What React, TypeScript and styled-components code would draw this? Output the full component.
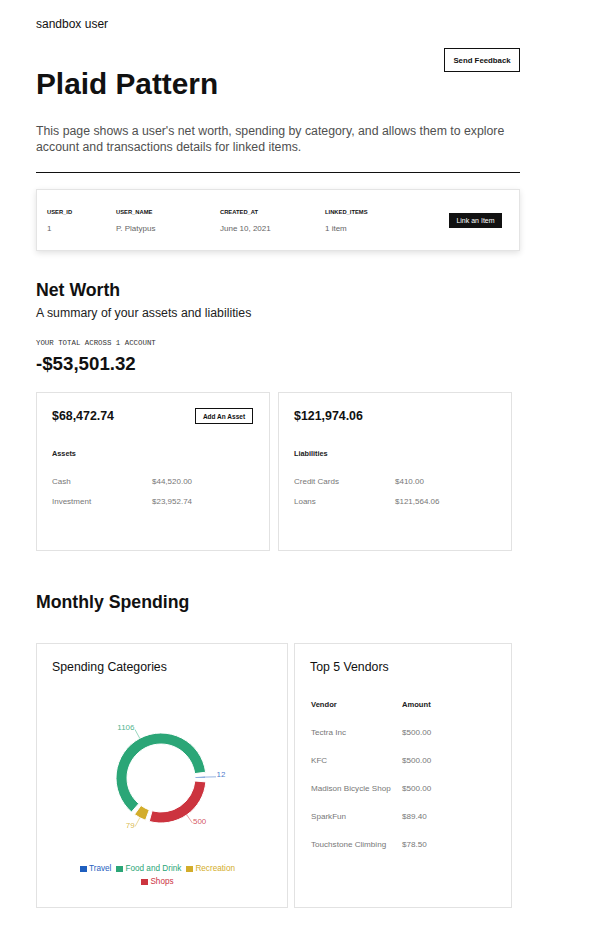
import React from "react";
import styled, { createGlobalStyle } from "styled-components";

const GlobalStyle = createGlobalStyle`
  html, body { margin: 0; padding: 0; background: #fff; }
  body { font-family: "Liberation Sans", Arial, sans-serif; color: #111; }
  * { box-sizing: border-box; }
`;

const Page = styled.div`
  width: 601px;
  padding: 15px 81px 16px 36px;
`;

const UserLabel = styled.div`
  font-size: 12px;
  line-height: 18px;
  color: #111;
`;

const HeaderRow = styled.div`
  display: flex;
  justify-content: space-between;
  align-items: flex-start;
  margin-top: 15px;
`;

const Title = styled.h1`
  margin: 18px 0 0;
  font-size: 29.8px;
  line-height: 36px;
  font-weight: 700;
  color: #111;
`;

const OutlineButton = styled.button<{ $w: number; $h: number; $fs: number; $bw?: number }>`
  width: ${(p) => p.$w}px;
  height: ${(p) => p.$h}px;
  border: ${(p) => p.$bw ?? 1}px solid #111;
  background: #fff;
  color: #111;
  font-family: "Liberation Sans", Arial, sans-serif;
  font-size: ${(p) => p.$fs}px;
  font-weight: 700;
  padding: 0;
  flex-shrink: 0;
`;

const Description = styled.p`
  margin: 21px 0 0;
  font-size: 12.3px;
  line-height: 16px;
  color: #505050;
`;

const Rule = styled.hr`
  margin: 17px 0 0;
  border: 0;
  border-top: 1px solid #111;
`;

const UserCard = styled.div`
  margin-top: 16px;
  height: 62px;
  border: 1px solid #e4e4e4;
  box-shadow: 0 2px 6px rgba(0, 0, 0, 0.12);
  display: grid;
  grid-template-columns: 69px 104px 105px 1fr auto;
  align-items: center;
  padding: 0 17px 0 10px;
`;

const UserCell = styled.div`
  display: flex;
  flex-direction: column;
  gap: 6px;
  padding-top: 1px;
`;

const CellHead = styled.div`
  font-size: 5.8px;
  line-height: 10px;
  font-weight: 700;
  color: #111;
  text-transform: uppercase;
`;

const CellValue = styled.div`
  font-size: 8px;
  line-height: 12px;
  color: #666;
`;

const DarkButton = styled.button`
  width: 53px;
  height: 15px;
  background: #111;
  color: #fff;
  border: 0;
  font-family: "Liberation Sans", Arial, sans-serif;
  font-size: 7px;
  padding: 0;
`;

const SectionTitle = styled.h2<{ $mt: number }>`
  margin: ${(p) => p.$mt}px 0 0;
  font-size: 17.7px;
  line-height: 22px;
  font-weight: 700;
  color: #111;
`;

const SubTitle = styled.div`
  margin-top: 4px;
  font-size: 12.3px;
  line-height: 16px;
  color: #222;
`;

const MonoLabel = styled.div`
  margin-top: 17px;
  font-family: "Liberation Mono", "DejaVu Sans Mono", monospace;
  font-size: 7.4px;
  line-height: 10px;
  color: #333;
  text-transform: uppercase;
`;

const Total = styled.div`
  margin-top: 5px;
  font-size: 18.7px;
  line-height: 22px;
  font-weight: 700;
  color: #111;
`;

const CardRow = styled.div<{ $mt: number; $gap: number; $h: number; $cols: string }>`
  margin-top: ${(p) => p.$mt}px;
  display: grid;
  grid-template-columns: ${(p) => p.$cols};
  gap: ${(p) => p.$gap}px;
  height: ${(p) => p.$h}px;
`;

const Card = styled.div`
  border: 1px solid #e2e2e2;
  padding: 15px 16px 0 15px;
  display: flex;
  flex-direction: column;
`;

const CardHead = styled.div`
  display: flex;
  justify-content: space-between;
  align-items: center;
  height: 16px;
`;

const Amount = styled.div`
  font-size: 12.4px;
  font-weight: 700;
  color: #111;
`;

const SmallBold = styled.div<{ $mt: number }>`
  margin-top: ${(p) => p.$mt}px;
  font-size: 7.3px;
  line-height: 10px;
  font-weight: 700;
  color: #222;
`;

const AccountList = styled.div`
  margin-top: 17px;
  display: flex;
  flex-direction: column;
  gap: 8px;
`;

const AccountRow = styled.div<{ $first: number }>`
  display: grid;
  grid-template-columns: ${(p) => p.$first}px 1fr;
  font-size: 8px;
  line-height: 12px;
  color: #777;
`;

const CardTitle = styled.div`
  font-size: 12.3px;
  line-height: 16px;
  color: #111;
`;

const ChartSvg = styled.svg`
  display: block;
  margin-top: 5px;
`;

const Legend = styled.div`
  margin-top: 6px;
  display: flex;
  flex-wrap: wrap;
  justify-content: center;
  padding: 0 32px 0 24px;
  font-size: 8.2px;
  line-height: 13px;
`;

const LegendItem = styled.span<{ $c: string }>`
  display: inline-flex;
  align-items: center;
  margin: 0 2.5px;
  color: ${(p) => p.$c};
  &::before {
    content: "";
    width: 7px;
    height: 6px;
    margin-right: 2px;
    background: ${(p) => p.$c};
  }
`;

const VendorTable = styled.div`
  margin-top: 24px;
  display: flex;
  flex-direction: column;
  gap: 16px;
`;

const VendorRow = styled.div<{ $head?: boolean }>`
  display: grid;
  grid-template-columns: 91px 1fr;
  padding-left: 1px;
  font-size: ${(p) => (p.$head ? 7.6 : 8.1)}px;
  font-weight: ${(p) => (p.$head ? 700 : 400)};
  line-height: 12px;
  color: ${(p) => (p.$head ? "#222" : "#777")};
`;

const slices = [
  { name: "Travel", value: 12, color: "#1f5fbf" },
  { name: "Food and Drink", value: 1106, color: "#2ba677" },
  { name: "Recreation", value: 79, color: "#d3ad2b" },
  { name: "Shops", value: 500, color: "#cc343f" },
];

const CX = 109;
const CY = 98;
const RO = 45;
const RI = 34;
const PAD = 5;

const pt = (r: number, a: number) => {
  const rad = (a * Math.PI) / 180;
  return [CX + r * Math.cos(rad), CY - r * Math.sin(rad)];
};

const arcPath = (a0: number, a1: number) => {
  const large = a1 - a0 > 180 ? 1 : 0;
  const [x0, y0] = pt(RO, a0);
  const [x1, y1] = pt(RO, a1);
  const [x2, y2] = pt(RI, a1);
  const [x3, y3] = pt(RI, a0);
  return `M${x0} ${y0} A${RO} ${RO} 0 ${large} 0 ${x1} ${y1} L${x2} ${y2} A${RI} ${RI} 0 ${large} 1 ${x3} ${y3} Z`;
};

const Donut = () => {
  const total = slices.reduce((s, d) => s + d.value, 0);
  const avail = 360 - PAD * slices.length;
  let a = 0;
  const parts = slices.map((d) => {
    const a0 = a;
    const a1 = a0 + (d.value / total) * avail;
    a = a1 + PAD;
    const mid = (a0 + a1) / 2;
    const [lx0, ly0] = pt(RO, mid);
    const [lx1, ly1] = pt(RO + 10, mid);
    const right = lx1 >= CX;
    return (
      <g key={d.name}>
        <path d={arcPath(a0, a1)} fill={d.color} stroke="#fff" strokeWidth={1} />
        <line x1={lx0} y1={ly0} x2={lx1} y2={ly1} stroke={d.color} strokeOpacity={0.6} strokeWidth={0.8} />
        <text
          x={lx1 + (right ? 0.5 : -0.5)}
          y={ly1 - (mid < 180 ? 2 : 1.5)}
          fill={d.color}
          fillOpacity={0.85}
          fontSize={8}
          fontFamily='"Liberation Sans", Arial, sans-serif'
          textAnchor={right ? "start" : "end"}
          dominantBaseline="central"
        >
          {d.value}
        </text>
      </g>
    );
  });
  return (
    <ChartSvg width={220} height={176} viewBox="0 0 220 176">
      {parts}
    </ChartSvg>
  );
};

const vendors = [
  ["Tectra Inc", "$500.00"],
  ["KFC", "$500.00"],
  ["Madison Bicycle Shop", "$500.00"],
  ["SparkFun", "$89.40"],
  ["Touchstone Climbing", "$78.50"],
];

export default function App() {
  return (
    <>
      <GlobalStyle />
      <Page>
        <UserLabel>sandbox user</UserLabel>
        <HeaderRow>
          <Title>Plaid Pattern</Title>
          <OutlineButton $w={76} $h={24} $fs={7.8} $bw={1.3}>Send Feedback</OutlineButton>
        </HeaderRow>
        <Description>
          This page shows a user's net worth, spending by category, and allows them to explore account and
          transactions details for linked items.
        </Description>
        <Rule />
        <UserCard>
          <UserCell>
            <CellHead>user_id</CellHead>
            <CellValue>1</CellValue>
          </UserCell>
          <UserCell>
            <CellHead>user_name</CellHead>
            <CellValue>P. Platypus</CellValue>
          </UserCell>
          <UserCell>
            <CellHead>created_at</CellHead>
            <CellValue>June 10, 2021</CellValue>
          </UserCell>
          <UserCell>
            <CellHead>linked_items</CellHead>
            <CellValue>1 item</CellValue>
          </UserCell>
          <DarkButton>Link an Item</DarkButton>
        </UserCard>

        <SectionTitle $mt={28}>Net Worth</SectionTitle>
        <SubTitle>A summary of your assets and liabilities</SubTitle>
        <MonoLabel>Your total across 1 account</MonoLabel>
        <Total>-$53,501.32</Total>

        <CardRow $mt={17} $gap={8} $h={159} $cols="234px 234px">
          <Card>
            <CardHead>
              <Amount>$68,472.74</Amount>
              <OutlineButton $w={58} $h={16} $fs={6.5}>Add An Asset</OutlineButton>
            </CardHead>
            <SmallBold $mt={25}>Assets</SmallBold>
            <AccountList>
              <AccountRow $first={100}>
                <span>Cash</span>
                <span>$44,520.00</span>
              </AccountRow>
              <AccountRow $first={100}>
                <span>Investment</span>
                <span>$23,952.74</span>
              </AccountRow>
            </AccountList>
          </Card>
          <Card>
            <CardHead>
              <Amount>$121,974.06</Amount>
            </CardHead>
            <SmallBold $mt={25}>Liabilities</SmallBold>
            <AccountList>
              <AccountRow $first={101}>
                <span>Credit Cards</span>
                <span>$410.00</span>
              </AccountRow>
              <AccountRow $first={101}>
                <span>Loans</span>
                <span>$121,564.06</span>
              </AccountRow>
            </AccountList>
          </Card>
        </CardRow>

        <SectionTitle $mt={40}>Monthly Spending</SectionTitle>

        <CardRow $mt={30} $gap={6} $h={265} $cols="252px 218px">
          <Card>
            <CardTitle>Spending Categories</CardTitle>
            <Donut />
            <Legend>
              {slices.map((s) => (
                <LegendItem key={s.name} $c={s.color}>
                  {s.name}
                </LegendItem>
              ))}
            </Legend>
          </Card>
          <Card>
            <CardTitle>Top 5 Vendors</CardTitle>
            <VendorTable>
              <VendorRow $head>
                <span>Vendor</span>
                <span>Amount</span>
              </VendorRow>
              {vendors.map(([v, a]) => (
                <VendorRow key={v}>
                  <span>{v}</span>
                  <span>{a}</span>
                </VendorRow>
              ))}
            </VendorTable>
          </Card>
        </CardRow>
      </Page>
    </>
  );
}
